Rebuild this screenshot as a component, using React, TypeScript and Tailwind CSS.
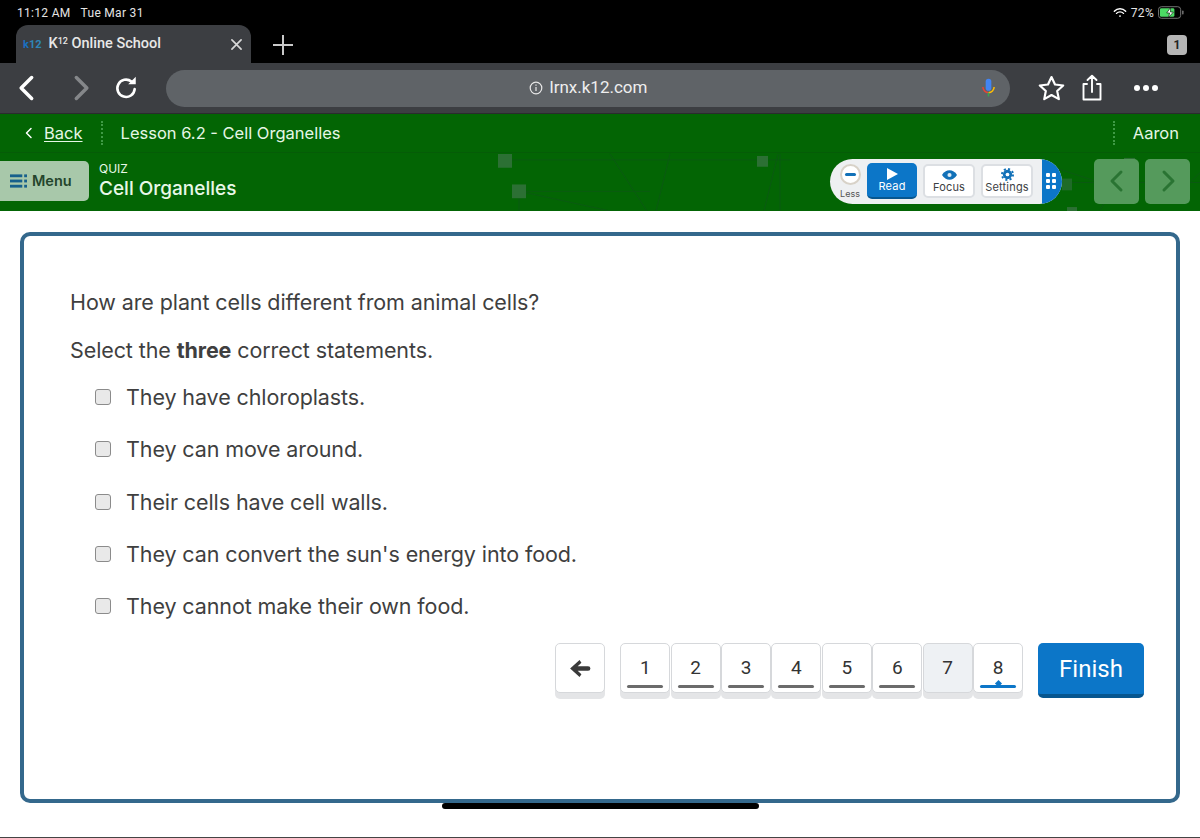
import React from "react";

const PG = "font-['Inter','Liberation_Sans',sans-serif]";

function Chev({ dir, className }: { dir: "l" | "r"; className?: string }) {
  return (
    <svg viewBox="0 0 24 24" className={className} fill="none" stroke="currentColor" strokeWidth="3" strokeLinecap="round" strokeLinejoin="round">
      <path d={dir === "l" ? "M16 3 7 12l9 9" : "M8 3l9 9-9 9"} />
    </svg>
  );
}

function Pattern() {
  return (
    <svg className="absolute inset-0 w-full h-full" viewBox="0 0 1200 59" preserveAspectRatio="none">
      <g stroke="#0b5a12" strokeWidth="1" fill="none">
        <path d="M512 7H790M610 1l37 58M670 1l-14 58M520 39H650M520 39l90 20M519 44v15M778 1l-14 58M780 1v58" />
        <path d="M1000 30H1200M1040 10l60 20M1130 8l-30 50M1180 40l20-20" />
      </g>
      <g fill="#2c7034">
        <rect x="498" y="1" width="14" height="14" />
        <rect x="512" y="32" width="14" height="14" />
        <rect x="757" y="3" width="11" height="11" />
        <rect x="1062" y="26" width="10" height="12" fill="#1f6b28" />
        <rect x="1124" y="5" width="11" height="9" />
        <rect x="1067" y="55" width="10" height="4" />
      </g>
    </svg>
  );
}

function Tool({ label, children, active }: { label: string; children: React.ReactNode; active?: boolean }) {
  return (
    <div
      className={
        active
          ? "w-[50px] h-[36px] rounded-[5px] bg-[#0c76c8] border-b-2 border-[#07568f] flex flex-col items-center justify-center text-white"
          : "w-[52px] h-[34px] rounded-[5px] bg-white border-2 border-[#dcdfe3] flex flex-col items-center justify-center text-[#3c4043]"
      }
    >
      <div className="h-[13px] flex items-center">{children}</div>
      <span className="text-[11px] leading-[13px] tracking-[0.2px]">{label}</span>
    </div>
  );
}

function Option({ text }: { text: string }) {
  return (
    <div className="h-[52.25px] flex items-center">
      <div className="w-[16px] h-[16px] rounded-[3px] border border-[#8b8b8b] bg-[#e9e9e9] ml-[25px] mr-[15px] shrink-0" />
      <span className="text-[21.5px] tracking-[-0.1px] text-[#3f3f3f]">{text}</span>
    </div>
  );
}

function Num({ n, gray, current }: { n: number; gray?: boolean; current?: boolean }) {
  return (
    <div
      className={`relative w-[50px] h-[50px] rounded-[5px] border border-[#d6d8db] shadow-[0_6px_0_#e4e5e7] flex items-start justify-center font-['Roboto',sans-serif] text-[19px] text-[#333] pt-[12px] leading-[24px] ${gray ? "bg-[#eef1f4]" : "bg-white"}`}
    >
      {n}
      {!gray && (
        <div className={`absolute left-[6px] right-[6px] bottom-[4px] h-[3px] rounded-full ${current ? "bg-[#0c76c8]" : "bg-[#6b6b6b]"}`} />
      )}
      {current && <div className="absolute left-[22px] bottom-[6px] w-[5px] h-[5px] rotate-45 bg-[#0c76c8]" />}
    </div>
  );
}

export default function App() {
  return (
    <div className={`w-[1200px] h-[838px] bg-white flex flex-col overflow-hidden ${PG}`}>
      {/* Status bar */}
      <div className="h-[25px] bg-black text-[#e4e4e4] text-[12px] flex items-center justify-between pl-[17px] pr-[15px] font-['Roboto',sans-serif] tracking-[0.3px]">
        <div className="flex gap-[10px]">
          <span>11:12 AM</span>
          <span>Tue Mar 31</span>
        </div>
        <div className="flex items-center gap-[4px]">
          <svg viewBox="0 0 16 12" className="w-[14px] h-[11px]" fill="none" stroke="white" strokeWidth="1.6" strokeLinecap="round">
            <path d="M1.5 4.5a9 9 0 0 1 13 0M4 7a5.5 5.5 0 0 1 8 0" />
            <circle cx="8" cy="10" r="1" fill="white" stroke="none" />
          </svg>
          <span>72%</span>
          <svg viewBox="0 0 28 13" className="w-[27px] h-[13px]">
            <rect x="0.5" y="0.5" width="23" height="12" rx="3" fill="none" stroke="#777" />
            <rect x="2" y="2" width="15" height="9" rx="1.5" fill="#4cd964" />
            <path d="M13 1.5 9 7h3l-1 4.5L16 6h-3z" fill="white" stroke="#000" strokeWidth="0.6" />
            <rect x="25" y="4.5" width="1.5" height="4" rx="0.7" fill="#777" />
          </svg>
        </div>
      </div>

      {/* Tab row */}
      <div className="h-[38px] bg-black flex items-end pl-[16px] pr-[13px] relative">
        <div className="w-[235px] h-[38px] rounded-t-[12px] bg-[#3c3e42] flex items-center pl-[7px] pr-[9px] text-[14.5px] font-medium text-[#e8e8e8] font-['Roboto',sans-serif]">
          <span className="text-[11px] font-bold text-[#2f86b8] mr-[7px] leading-none">
            <span className="text-[#1a6fc0]">k</span>12
          </span>
          <span>
            K<sup className="text-[9px]">12</sup> Online School
          </span>
          <svg viewBox="0 0 12 12" className="w-[11px] h-[11px] ml-auto" stroke="#d8d8d8" strokeWidth="1.8" strokeLinecap="round">
            <path d="M1 1l10 10M11 1 1 11" />
          </svg>
        </div>
        <svg viewBox="0 0 22 22" className="w-[22px] h-[22px] ml-[21px] mb-[7px]" stroke="#c9c9c9" strokeWidth="2">
          <path d="M11 1v20M1 11h20" />
        </svg>
        <div className="ml-auto mb-[8px] w-[20px] h-[20px] rounded-[4px] bg-[#b5b5b5] text-[#222] text-[12px] font-bold flex items-center justify-center font-['Roboto',sans-serif]">
          1
        </div>
      </div>

      {/* Toolbar */}
      <div className="h-[51px] bg-[#3c3e42] border-b border-[#2a2c2e] flex items-center relative">
        <Chev dir="l" className="w-[28px] h-[28px] text-white ml-[13px]" />
        <Chev dir="r" className="w-[28px] h-[28px] text-[#85878a] ml-[26px]" />
        <svg viewBox="0 0 24 24" className="w-[26px] h-[26px] ml-[18px]" fill="none" stroke="white" strokeWidth="2.4" strokeLinecap="round">
          <path d="M20 13a8 8 0 1 1-3-7" />
          <path d="M21 1.5v7h-7z" fill="white" stroke="none" />
        </svg>
        <div className="relative w-[844px] h-[37px] ml-[27px] rounded-full bg-[#5f6367] flex items-center justify-center text-[#eeeeee] text-[17px] font-['Roboto',sans-serif]">
          <svg viewBox="0 0 14 14" className="w-[14px] h-[14px] mr-[7px]" fill="none" stroke="#e8e8e8" strokeWidth="1.2">
            <circle cx="7" cy="7" r="5.8" />
            <path d="M7 6v4M7 3.6v1.2" />
          </svg>
          lrnx.k12.com
          <svg viewBox="0 0 16 22" className="absolute right-[14px] w-[15px] h-[22px]" fill="none">
            <rect x="5" y="1" width="6" height="13" rx="3" fill="#4285f4" />
            <path d="M2 10a6 6 0 0 0 6 6" stroke="#ea4335" strokeWidth="1.6" />
            <path d="M14 10a6 6 0 0 1-6 6" stroke="#fbbc05" strokeWidth="1.6" />
            <path d="M8 16v4" stroke="#34a853" strokeWidth="1.6" />
          </svg>
        </div>
        <svg viewBox="0 0 24 24" className="w-[29px] h-[29px] ml-[27px]" fill="none" stroke="white" strokeWidth="1.8" strokeLinejoin="round">
          <path d="M12 2.5l2.9 6.2 6.8.8-5 4.6 1.4 6.7-6.1-3.4-6 3.4 1.3-6.7-5-4.6 6.8-.8z" />
        </svg>
        <svg viewBox="0 0 24 28" className="w-[24px] h-[28px] ml-[14px]" fill="none" stroke="white" strokeWidth="1.9" strokeLinecap="round" strokeLinejoin="round">
          <path d="M7 10H3.5v15.5h17V10H17M12 18V2M7.5 6 12 1.8 16.5 6" />
        </svg>
        <div className="flex gap-[3px] ml-[30px]">
          <span className="w-[6px] h-[6px] rounded-full bg-white" />
          <span className="w-[6px] h-[6px] rounded-full bg-white" />
          <span className="w-[6px] h-[6px] rounded-full bg-white" />
        </div>
      </div>

      {/* Lesson bar */}
      <div className="h-[38px] bg-[#036504] flex items-center text-[#e6f7e6] text-[16.5px]">
        <Chev dir="l" className="w-[12px] h-[12px] text-white ml-[23px]" />
        <span className="ml-[9px] underline underline-offset-2">Back</span>
        <div className="ml-[18px] h-[24px] border-l-2 border-dotted border-[#3f9a45]" />
        <span className="ml-[18px]">Lesson 6.2 - Cell Organelles</span>
        <div className="ml-auto h-[24px] border-l-2 border-dotted border-[#3f9a45]" />
        <span className="ml-[18px] mr-[21px]">Aaron</span>
      </div>

      {/* Quiz bar */}
      <div className="relative h-[59px] bg-[#036504] flex items-center border-t border-[#055c07]">
        <Pattern />
        <div className="relative w-[89px] h-[40px] rounded-r-[5px] bg-[#a8c8aa] flex items-center pl-[10px] gap-[5px] -mt-[2px]">
          <svg viewBox="0 0 18 14" className="w-[17px] h-[14px]" fill="#17608c">
            <rect x="0" y="0" width="13" height="3" />
            <rect x="0" y="5.5" width="13" height="3" />
            <rect x="0" y="11" width="13" height="3" />
            <rect x="15" y="0" width="3" height="3" />
            <rect x="15" y="5.5" width="3" height="3" />
            <rect x="15" y="11" width="3" height="3" />
          </svg>
          <span className="text-[14.5px] font-semibold text-[#24452c]">Menu</span>
        </div>
        <div className="relative ml-[10px] text-[#e8f8e8] -mt-[1px]">
          <div className="text-[12px] leading-[14px]">QUIZ</div>
          <div className="text-[19px] leading-[26px] font-medium">Cell Organelles</div>
        </div>

        <div className="relative ml-auto flex items-center h-[45px] w-[232px] rounded-full bg-[#eef0f2] -mt-[2px] overflow-hidden pl-[7px]">
          <div className="flex flex-col items-center w-[26px] mr-[4px]">
            <div className="w-[21px] h-[21px] rounded-full bg-white border-2 border-[#d8d2c8] flex items-center justify-center">
              <div className="w-[11px] h-[3px] bg-[#1271b8] rounded-sm" />
            </div>
            <span className="text-[9px] leading-[11px] mt-[3px] text-[#555]">Less</span>
          </div>
          <Tool label="Read" active>
            <svg viewBox="0 0 12 12" className="w-[12px] h-[12px]" fill="white"><path d="M1 0l11 6-11 6z" /></svg>
          </Tool>
          <div className="w-[6px]" />
          <Tool label="Focus">
            <svg viewBox="0 0 16 10" className="w-[15px] h-[10px]" fill="#1271b8">
              <path d="M0 5c2-3.4 5-5 8-5s6 1.6 8 5c-2 3.4-5 5-8 5S2 8.400 0 5z" />
              <circle cx="8" cy="5" r="2.200" fill="#dcecf7" />
            </svg>
          </Tool>
          <div className="w-[6px]" />
          <Tool label="Settings">
            <svg viewBox="0 0 14 14" className="w-[13px] h-[13px]">
              <circle cx="7" cy="7" r="5" fill="#1271b8" />
              <circle cx="7" cy="7" r="6" fill="none" stroke="#1271b8" strokeWidth="2" strokeDasharray="2.200 2.500" />
              <circle cx="7" cy="7" r="2" fill="white" />
            </svg>
          </Tool>
          <div className="absolute right-0 top-0 bottom-0 w-[20px] bg-[#0c76c8] rounded-r-full flex items-center justify-start pl-[4px]">
            <div className="grid grid-cols-2 gap-[2px]">
              {[0, 1, 2, 3, 4, 5].map((i) => (
                <span key={i} className="w-[4px] h-[4px] bg-white rounded-[1px]" />
              ))}
            </div>
          </div>
        </div>
        <div className="relative ml-[32px] w-[45px] h-[45px] rounded-[5px] bg-[#559a5c] flex items-center justify-center -mt-[2px]">
          <Chev dir="l" className="w-[24px] h-[24px] text-[#2a7433]" />
        </div>
        <div className="relative ml-[6px] mr-[10px] w-[45px] h-[45px] rounded-[5px] bg-[#559a5c] flex items-center justify-center -mt-[2px]">
          <Chev dir="r" className="w-[24px] h-[24px] text-[#2a7433]" />
        </div>
      </div>

      {/* Body */}
      <div className="flex-1 pt-[21px] px-[20px]">
        <div className="w-[1160px] h-[571px] rounded-[10px] border-4 border-[#34688c] bg-white pl-[46px] pr-[32px] text-[#3f3f3f] flex flex-col">
          <p className="mt-[51px] text-[21.5px] leading-[30px] tracking-[-0.1px]">How are plant cells different from animal cells?</p>
          <p className="mt-[18px] text-[21.5px] leading-[30px] tracking-[-0.1px]">
            Select the <b className="font-bold">three</b> correct statements.
          </p>
          <div className="mt-[6px]">
            <Option text="They have chloroplasts." />
            <Option text="They can move around." />
            <Option text="Their cells have cell walls." />
            <Option text="They can convert the sun's energy into food." />
            <Option text="They cannot make their own food." />
          </div>
          <div className="mt-[11px] flex justify-end items-start">
            <div className="w-[50px] h-[50px] rounded-[5px] border border-[#d6d8db] shadow-[0_6px_0_#e4e5e7] bg-white flex items-center justify-center mr-[15px]">
              <svg viewBox="0 0 22 18" className="w-[21px] h-[17px]" fill="#3a3a3a">
                <path d="M10 0 0 9l10 9 2-3-4-3.500h11a2.500 2.500 0 0 0 0-5H8L12 3z" />
              </svg>
            </div>
            <div className="flex gap-[0.4px] mr-[15px]">
              {[1, 2, 3, 4, 5, 6].map((n) => (
                <Num key={n} n={n} />
              ))}
              <Num n={7} gray />
              <Num n={8} current />
            </div>
            <div className="w-[106px] h-[55px] rounded-[5px] bg-[#0c76c8] border-b-4 border-[#07568f] flex items-center justify-center text-white text-[24px] font-['Roboto',sans-serif]">
              Finish
            </div>
          </div>
        </div>
      </div>

      {/* Home indicator */}
      <div className="h-[35px] flex justify-center items-start pt-[0px] border-b border-[#444]">
        <div className="w-[317px] h-[6px] mt-[0px] rounded-full bg-black" />
      </div>
    </div>
  );
}
